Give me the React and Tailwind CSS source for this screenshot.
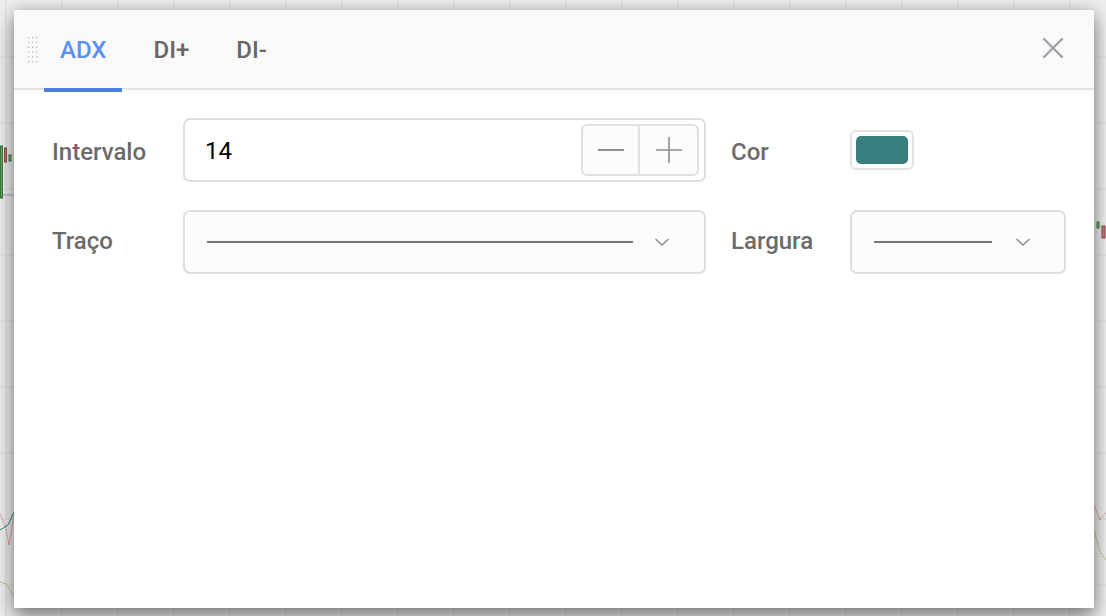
import { useState } from 'react';

const FONT = { fontFamily: 'Roboto, "Liberation Sans", sans-serif' };

function ChartBackdrop() {
  // faint chart behind the dialog
  const vlines = [];
  for (let x = 6; x < 1106; x += 56) vlines.push(x);
  const hlines = [];
  for (let y = 57; y < 616; y += 66) hlines.push(y);
  return (
    <svg className="absolute inset-0" width="1106" height="616">
      {vlines.map((x) => (
        <line key={'v' + x} x1={x} y1="0" x2={x} y2="616" stroke="#dadada" strokeWidth="1" />
      ))}
      {hlines.map((y) => (
        <line key={'h' + y} x1="0" y1={y} x2="1106" y2={y} stroke="#dadada" strokeWidth="1" />
      ))}
      <line x1="0" y1="195" x2="14" y2="195" stroke="#9aa7c0" strokeWidth="1" />
      <rect x="0.5" y="146" width="2" height="52" fill="#6aa36a" stroke="#3c7a3c" strokeWidth="1" />
      <rect x="4.5" y="148" width="2" height="14" fill="#c77" stroke="#944" strokeWidth="1" />
      <rect x="9" y="155" width="2" height="6" fill="#8b8" stroke="#3c7a3c" strokeWidth="1" />
      <polyline points="0,514 6,528 9,545 14,515" fill="none" stroke="#c66" strokeWidth="1" strokeDasharray="1 1" />
      <polyline points="0,530 8,525 14,512" fill="none" stroke="#2c8a8a" strokeWidth="1" />
      <polyline points="0,582 6,584 14,596" fill="none" stroke="#8a4" strokeWidth="1" strokeDasharray="1 1" />
      <rect x="1097" y="222" width="2" height="6" fill="#8b8" stroke="#3c7a3c" strokeWidth="1" />
      <rect x="1102" y="226" width="3" height="12" fill="#c77" stroke="#944" strokeWidth="1" />
      <polyline points="1094,505 1100,520 1106,512" fill="none" stroke="#c66" strokeWidth="1" strokeDasharray="1 1" />
      <polyline points="1094,530 1100,552 1106,560" fill="none" stroke="#8a4" strokeWidth="1" strokeDasharray="1 1" />
    </svg>
  );
}

function DragHandle() {
  const dots = [];
  for (let r = 0; r < 6; r++)
    for (let c = 0; c < 3; c++) dots.push(<rect key={r + '-' + c} x={c * 4} y={r * 4.8} width="1.3" height="1.3" fill="#b5b5b5" />);
  return (
    <svg width="11" height="26" className="shrink-0">
      {dots}
    </svg>
  );
}

function Chevron() {
  return (
    <svg width="16" height="10" viewBox="0 0 16 10" className="shrink-0">
      <path d="M1.5 2 L8 8 L14.5 2" fill="none" stroke="#8a8a8a" strokeWidth="1.4" />
    </svg>
  );
}

export default function App() {
  const [tab, setTab] = useState('ADX');
  const [interval, setInterval] = useState(14);
  const tabs = ['ADX', 'DI+', 'DI-'];

  return (
    <div className="relative w-[1106px] h-[616px] overflow-hidden bg-[#ededed]" style={FONT}>
      <ChartBackdrop />
      <div className="relative pt-[10px] pl-[14px]">
        <div className="w-[1080px] h-[598px] bg-white shadow-[0_10px_18px_rgba(0,0,0,0.4),0_0_14px_rgba(0,0,0,0.2)] flex flex-col">
          {/* header */}
          <div className="h-[80px] bg-[#f9f9f9] border-b-2 border-[#e3e3e3] flex items-stretch pl-[14px] pr-[30px]">
            <div className="flex items-center pt-[2px]">
              <DragHandle />
            </div>
            <div className="flex ml-[5px] gap-[15px] items-stretch">
              {tabs.map((t) => (
                <button
                  key={t}
                  onClick={() => setTab(t)}
                  className={
                    'px-4 pt-[2px] text-[24px] font-medium leading-none flex items-center relative ' +
                    (tab === t ? 'text-[#5b8ff0]' : 'text-[#676767]')
                  }
                >
                  {t}
                  {tab === t && <span className="absolute left-0 right-0 -bottom-[4px] h-[4px] bg-[#4a80e2]" />}
                </button>
              ))}
            </div>
            <button className="ml-auto flex items-center pb-[2px]">
              <svg width="22" height="22" viewBox="0 0 22 22">
                <path d="M2 2 L20 20 M20 2 L2 20" stroke="#9ca1a8" strokeWidth="2.4" strokeLinecap="round" />
              </svg>
            </button>
          </div>

          {/* body */}
          <div className="pt-[28px] pl-[38px] grid grid-cols-[106px_523px_94px_216px] gap-x-[25px] gap-y-[28px] items-center">
            <div className="pt-[3px] text-[24px] font-medium text-[#6b6b6b]">Intervalo</div>
            <div className="h-[64px] border-2 border-[#dedede] rounded-[7px] flex items-center pl-[20px] pr-[5px]">
              <input
                value={interval}
                onChange={(e) => setInterval(e.target.value)}
                className="flex-1 min-w-0 pt-[2px] text-[24px] text-black outline-none bg-transparent"
              />
              <div className="flex h-[52px] border-2 border-[#e0e0e0] rounded-[6px] bg-[#fbfbfb]">
                <button onClick={() => setInterval(Number(interval) - 1)} className="w-[57px] flex items-center justify-center border-r-2 border-[#e0e0e0]">
                  <span className="block w-[26px] h-[2px] bg-[#8e8e8e]" />
                </button>
                <button onClick={() => setInterval(Number(interval) + 1)} className="w-[57px] flex items-center justify-center">
                  <svg width="26" height="26" viewBox="0 0 26 26">
                    <path d="M13 0 V26 M0 13 H26" stroke="#8e8e8e" strokeWidth="1.6" />
                  </svg>
                </button>
              </div>
            </div>
            <div className="pt-[3px] text-[24px] font-medium text-[#6b6b6b]">Cor</div>
            <div>
              <div className="w-[64px] h-[40px] border-2 border-[#e3e3e3] rounded-[6px] p-[4px]">
                <div className="w-full h-full rounded-[5px] bg-[#377e7c]" />
              </div>
            </div>

            <div className="pb-[3px] text-[24px] font-medium text-[#6b6b6b]">Traço</div>
            <button className="h-[64px] border-2 border-[#dedede] rounded-[7px] bg-[#fcfcfc] flex items-center pl-[22px] pr-[34px]">
              <span className="block w-[426px] h-[2px] bg-[#777]" />
              <span className="ml-auto">
                <Chevron />
              </span>
            </button>
            <div className="pb-[3px] text-[24px] font-medium text-[#6b6b6b]">Largura</div>
            <button className="h-[64px] border-2 border-[#dedede] rounded-[7px] bg-[#fcfcfc] flex items-center pl-[22px] pr-[33px]">
              <span className="block w-[118px] h-[2px] bg-[#777]" />
              <span className="ml-auto">
                <Chevron />
              </span>
            </button>
          </div>
        </div>
      </div>
    </div>
  );
}
